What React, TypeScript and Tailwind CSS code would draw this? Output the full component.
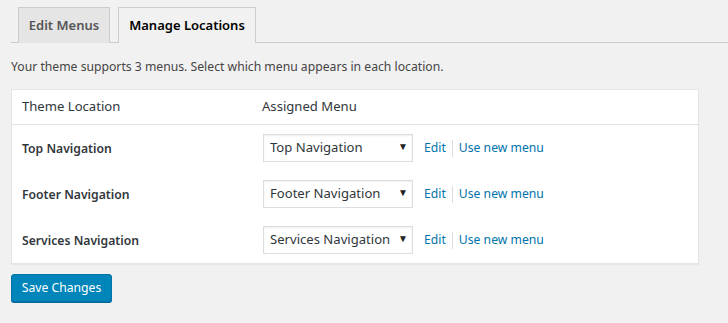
import React from 'react';

const locations = [
  { id: 'top', label: 'Top Navigation', menu: 'Top Navigation' },
  { id: 'footer', label: 'Footer Navigation', menu: 'Footer Navigation' },
  { id: 'services', label: 'Services Navigation', menu: 'Services Navigation' },
];

const menus = ['Top Navigation', 'Footer Navigation', 'Services Navigation'];

export default function App() {
  const [assigned, setAssigned] = React.useState<Record<string, string>>(
    Object.fromEntries(locations.map((l) => [l.id, l.menu]))
  );

  return (
    <div className="min-h-[323px] bg-[#f1f1f1] text-[12.2px] text-[#444] font-['Noto_Sans',sans-serif] pl-[11px] pt-[7px]">
      {/* tabs */}
      <div className="flex items-end border-b border-[#ccc] pl-[7px] gap-[8px] h-[36px]">
        <button className="w-[92px] bg-[#e5e5e5] border border-[#ccc] border-b-0 text-[13px] font-semibold text-[#555] leading-none -mb-px h-[36px]">
          Edit Menus
        </button>
        <button className="w-[138px] bg-[#f1f1f1] border border-[#ccc] border-b-0 text-[13px] font-semibold text-[#000] leading-none -mb-px h-[36px]">
          Manage Locations
        </button>
      </div>

      <p className="mt-[15px] mb-0 leading-[18px] text-[#444]">
        Your theme supports 3 menus. Select which menu appears in each location.
      </p>

      <div className="mt-[13px] w-[688px] bg-white border border-[#e5e5e5] shadow-[0_1px_1px_rgba(0,0,0,0.04)]">
        <div className="flex items-center h-[35px] border-b border-[#e1e1e1] text-[13.1px] text-[#32373c]">
          <div className="w-[250px] pl-[10px]">Theme Location</div>
          <div>Assigned Menu</div>
        </div>
        <div>
          {locations.map((l) => (
            <div key={l.id} className="flex items-center h-[46px]">
              <div className="w-[251px] pl-[10px] pt-[3px] font-semibold text-[#32373c]">{l.label}</div>
              <div className="relative w-[150px] h-[28px]">
                <select
                  value={assigned[l.id]}
                  onChange={(e) => setAssigned((p) => ({ ...p, [l.id]: e.target.value }))}
                  className="appearance-none w-full h-full border border-[#ddd] bg-white pl-[6px] pr-[18px] text-[13.1px] text-[#32373c] shadow-[inset_0_1px_2px_rgba(0,0,0,0.07)] outline-none"
                >
                  {menus.map((m) => (
                    <option key={m}>{m}</option>
                  ))}
                </select>
                <span className="pointer-events-none absolute right-[5px] top-[5px] text-[10px] text-[#222]">▼</span>
              </div>
              <a className="ml-[11px] text-[#0073aa]">Edit</a>
              <span className="mx-[6px] w-px h-[17px] bg-[#ddd]" />
              <a className="text-[#0073aa]">Use new menu</a>
            </div>
          ))}
        </div>
      </div>

      <button className="mt-[10px] h-[28px] w-[101px] bg-[#0085ba] border border-[#0073aa] rounded-[3px] text-white shadow-[0_1px_0_#006799]">
        Save Changes
      </button>
    </div>
  );
}
